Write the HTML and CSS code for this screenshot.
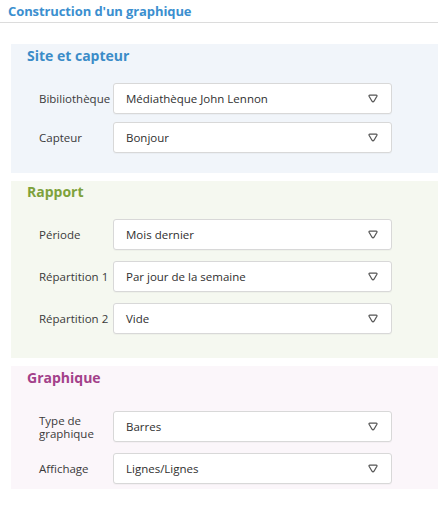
FILE: index.html
```html
<!DOCTYPE html>
<html lang="fr">
<head>
<meta charset="utf-8">
<title>Construction d'un graphique</title>
<link rel="stylesheet" href="styles.css">
</head>
<body>
<header class="topbar">
  <h1 class="title">Construction d'un graphique</h1>
</header>
<main class="content">
  <section class="panel panel-site">
    <h2 class="panel-title">Site et capteur</h2>
    <div class="rows">
      <div class="row">
        <label class="label">Bibiliothèque</label>
        <div class="select"><span>Médiathèque John Lennon</span><svg class="arrow" viewBox="0 0 10 9"><path d="M1.8 1.2 H8.2 Q9.4 1.2 8.9 2.3 L6 7.2 Q5 8.7 4 7.2 L1.1 2.3 Q0.6 1.2 1.8 1.2 Z"/></svg></div>
      </div>
      <div class="row">
        <label class="label">Capteur</label>
        <div class="select"><span>Bonjour</span><svg class="arrow" viewBox="0 0 10 9"><path d="M1.8 1.2 H8.2 Q9.4 1.2 8.9 2.3 L6 7.2 Q5 8.7 4 7.2 L1.1 2.3 Q0.6 1.2 1.8 1.2 Z"/></svg></div>
      </div>
    </div>
  </section>

  <section class="panel panel-rapport">
    <h2 class="panel-title">Rapport</h2>
    <div class="rows">
      <div class="row">
        <label class="label">Période</label>
        <div class="select"><span>Mois dernier</span><svg class="arrow" viewBox="0 0 10 9"><path d="M1.8 1.2 H8.2 Q9.4 1.2 8.9 2.3 L6 7.2 Q5 8.7 4 7.2 L1.1 2.3 Q0.6 1.2 1.8 1.2 Z"/></svg></div>
      </div>
      <div class="row">
        <label class="label">Répartition 1</label>
        <div class="select"><span>Par jour de la semaine</span><svg class="arrow" viewBox="0 0 10 9"><path d="M1.8 1.2 H8.2 Q9.4 1.2 8.9 2.3 L6 7.2 Q5 8.7 4 7.2 L1.1 2.3 Q0.6 1.2 1.8 1.2 Z"/></svg></div>
      </div>
      <div class="row">
        <label class="label">Répartition 2</label>
        <div class="select"><span>Vide</span><svg class="arrow" viewBox="0 0 10 9"><path d="M1.8 1.2 H8.2 Q9.4 1.2 8.9 2.3 L6 7.2 Q5 8.7 4 7.2 L1.1 2.3 Q0.6 1.2 1.8 1.2 Z"/></svg></div>
      </div>
    </div>
  </section>

  <section class="panel panel-graph">
    <h2 class="panel-title">Graphique</h2>
    <div class="rows">
      <div class="row">
        <label class="label">Type de graphique</label>
        <div class="select"><span>Barres</span><svg class="arrow" viewBox="0 0 10 9"><path d="M1.8 1.2 H8.2 Q9.4 1.2 8.9 2.3 L6 7.2 Q5 8.7 4 7.2 L1.1 2.3 Q0.6 1.2 1.8 1.2 Z"/></svg></div>
      </div>
      <div class="row">
        <label class="label">Affichage</label>
        <div class="select"><span>Lignes/Lignes</span><svg class="arrow" viewBox="0 0 10 9"><path d="M1.8 1.2 H8.2 Q9.4 1.2 8.9 2.3 L6 7.2 Q5 8.7 4 7.2 L1.1 2.3 Q0.6 1.2 1.8 1.2 Z"/></svg></div>
      </div>
    </div>
  </section>
</main>
</body>
</html>
```

FILE: styles.css
```css
* { box-sizing: border-box; }

html, body {
  margin: 0;
  padding: 0;
  background: #ffffff;
  font-family: "Open Sans", "Noto Sans", Arial, sans-serif;
  color: #333333;
  overflow: hidden;
}

.topbar {
  height: 23px;
  border-bottom: 1px solid #dcdcdc;
  padding: 0 8px;
}

.title {
  margin: 0;
  font-size: 13px;
  line-height: 22px;
  font-weight: 700;
  color: #3b8fcf;
  letter-spacing: -0.1px;
}

.content {
  padding: 21px 0 0 11px;
  display: flex;
  flex-direction: column;
  gap: 8px;
}

.panel {
  width: 440px;
  padding: 2px 0 20px 16px;
}

.panel-site { background: #f1f5fa; }
.panel-rapport { background: #f5f8f0; padding-top: 1px; padding-bottom: 24px; }
.panel-graph { background: #fbf6fa; padding-top: 2px; padding-bottom: 5px; }

.panel-title {
  margin: 0 0 17px 0;
  font-size: 14px;
  line-height: 20px;
  font-weight: 700;
}

.panel-site .panel-title { color: #3b8cc8; }
.panel-rapport .panel-title { color: #7ea23b; }
.panel-graph .panel-title { color: #a3418a; margin-bottom: 23px; }

.rows {
  display: flex;
  flex-direction: column;
  gap: 8px;
}

.panel-rapport .rows,
.panel-graph .rows { gap: 11px; }

.row {
  display: grid;
  grid-template-columns: 74px 279px;
  align-items: center;
  padding-left: 12px;
}

.label {
  font-size: 11.5px;
  line-height: 13px;
  color: #3a3a3a;
  padding-right: 4px;
}

.select {
  height: 31px;
  background: #ffffff;
  border: 1px solid #d8d8d8;
  border-radius: 3px;
  display: flex;
  align-items: center;
  justify-content: space-between;
  padding: 0 13px 0 12px;
  font-size: 11.5px;
  color: #2f2f2f;
  box-shadow: 0 1px 1px rgba(0,0,0,0.03);
}

.arrow {
  width: 10px;
  height: 9px;
  fill: none;
  stroke: #555555;
  stroke-width: 1.25;
}
```
